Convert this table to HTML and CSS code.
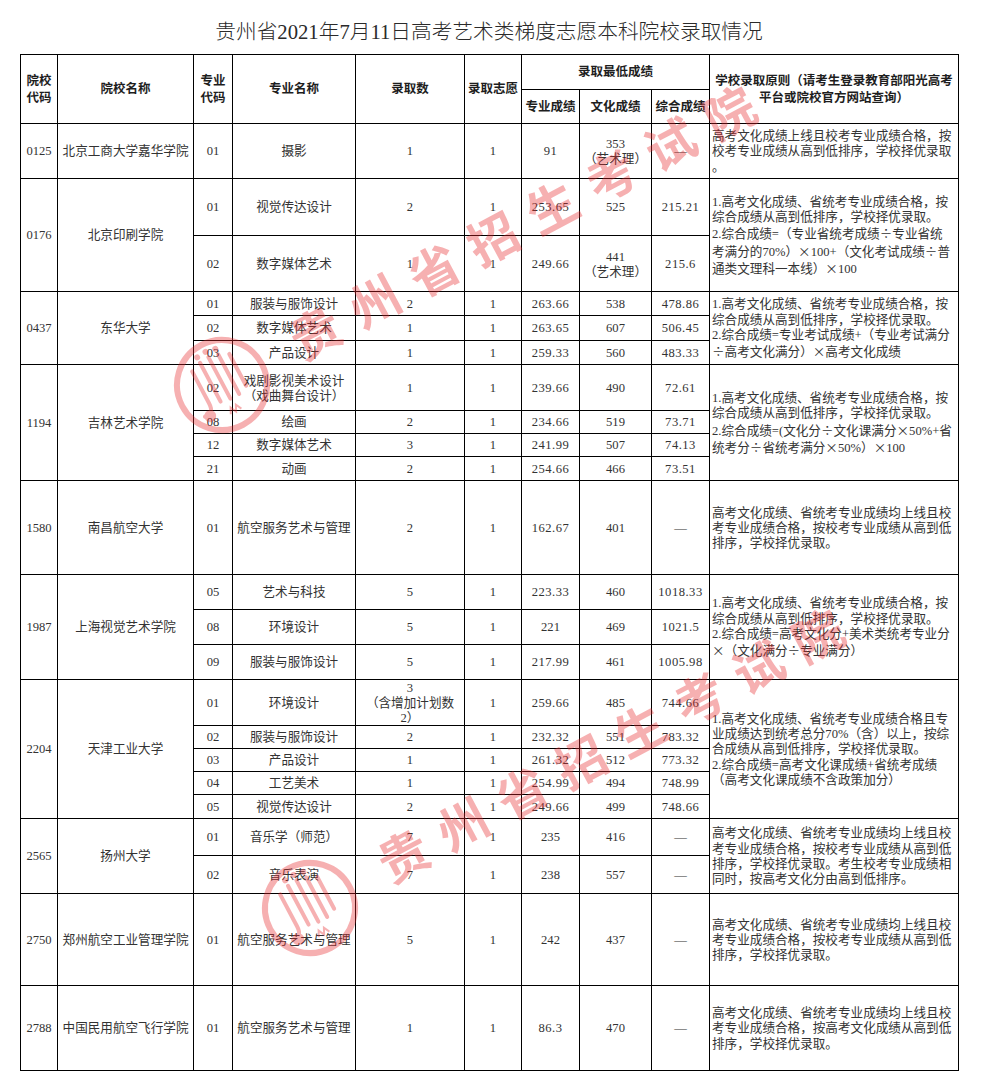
FILE: index.html
```html
<!DOCTYPE html>
<html lang="zh-CN">
<head>
<meta charset="utf-8">
<title>贵州省2021年7月11日高考艺术类梯度志愿本科院校录取情况</title>
<link rel="stylesheet" href="styles.css">
</head>
<body>
<main class="page">
  <h1 class="title">贵州省2021年7月11日高考艺术类梯度志愿本科院校录取情况</h1>
  <table class="grid">
    <colgroup>
      <col class="c1"><col class="c2"><col class="c3"><col class="c4"><col class="c5">
      <col class="c6"><col class="c7"><col class="c8"><col class="c9"><col class="c10">
    </colgroup>
    <thead>
      <tr class="h35">
        <th rowspan="2">院校<br>代码</th>
        <th rowspan="2">院校名称</th>
        <th rowspan="2">专业<br>代码</th>
        <th rowspan="2">专业名称</th>
        <th rowspan="2">录取数</th>
        <th rowspan="2">录取志愿</th>
        <th colspan="3">录取最低成绩</th>
        <th rowspan="2">学校录取原则（请考生登录教育部阳光高考<br>平台或院校官方网站查询）</th>
      </tr>
      <tr class="h34">
        <th>专业成绩</th><th>文化成绩</th><th>综合成绩</th>
      </tr>
    </thead>
    <tbody>
      <tr class="h55">
        <td>0125</td><td>北京工商大学嘉华学院</td><td>01</td><td>摄影</td><td>1</td><td>1</td>
        <td class="num">91</td><td class="ml">353<br>（艺术理）</td><td>—</td>
        <td class="rule">高考文化成绩上线且校考专业成绩合格，按<br>校考专业成绩从高到低排序，学校择优录取<br>。</td>
      </tr>

      <tr class="h57">
        <td rowspan="2">0176</td><td rowspan="2">北京印刷学院</td><td>01</td><td>视觉传达设计</td><td>2</td><td>1</td>
        <td class="num">253.65</td><td>525</td><td class="num">215.21</td>
        <td rowspan="2" class="rule">1.高考文化成绩、省统考专业成绩合格，按<br>综合成绩从高到低排序，学校择优录取。<br>2.综合成绩=（专业省统考成绩<span class="fw">÷</span>专业省统<br>考满分的70%）<span class="fw">×</span>100+（文化考试成绩<span class="fw">÷</span>普<br>通类文理科一本线）<span class="fw">×</span>100</td>
      </tr>
      <tr class="h56">
        <td>02</td><td>数字媒体艺术</td><td>1</td><td>1</td>
        <td class="num">249.66</td><td class="ml">441<br>（艺术理）</td><td class="num">215.6</td>
      </tr>

      <tr class="h24">
        <td rowspan="3">0437</td><td rowspan="3">东华大学</td><td>01</td><td>服装与服饰设计</td><td>2</td><td>1</td>
        <td class="num">263.66</td><td>538</td><td class="num">478.86</td>
        <td rowspan="3" class="rule">1.高考文化成绩、省统考专业成绩合格，按<br>综合成绩从高到低排序，学校择优录取。<br>2.综合成绩=专业考试成绩+（专业考试满分<br><span class="fw">÷</span>高考文化满分）<span class="fw">×</span>高考文化成绩</td>
      </tr>
      <tr class="h25">
        <td>02</td><td>数字媒体艺术</td><td>1</td><td>1</td><td class="num">263.65</td><td>607</td><td class="num">506.45</td>
      </tr>
      <tr class="h24">
        <td>03</td><td>产品设计</td><td>1</td><td>1</td><td class="num">259.33</td><td>560</td><td class="num">483.33</td>
      </tr>

      <tr class="h46">
        <td rowspan="4">1194</td><td rowspan="4">吉林艺术学院</td><td>02</td><td class="ml">戏剧影视美术设计<br>（戏曲舞台设计）</td><td>1</td><td>1</td>
        <td class="num">239.66</td><td>490</td><td class="num">72.61</td>
        <td rowspan="4" class="rule">1.高考文化成绩、省统考专业成绩合格，按<br>综合成绩从高到低排序，学校择优录取。<br>2.综合成绩=(文化分<span class="fw">÷</span>文化课满分<span class="fw">×</span>50%+省<br>统考分<span class="fw">÷</span>省统考满分<span class="fw">×</span>50%）<span class="fw">×</span>100</td>
      </tr>
      <tr class="h23">
        <td>08</td><td>绘画</td><td>2</td><td>1</td><td class="num">234.66</td><td>519</td><td class="num">73.71</td>
      </tr>
      <tr class="h23">
        <td>12</td><td>数字媒体艺术</td><td>3</td><td>1</td><td class="num">241.99</td><td>507</td><td class="num">74.13</td>
      </tr>
      <tr class="h24">
        <td>21</td><td>动画</td><td>2</td><td>1</td><td class="num">254.66</td><td>466</td><td class="num">73.51</td>
      </tr>

      <tr class="h94">
        <td>1580</td><td>南昌航空大学</td><td>01</td><td>航空服务艺术与管理</td><td>2</td><td>1</td>
        <td class="num">162.67</td><td>401</td><td>—</td>
        <td class="rule">高考文化成绩、省统考专业成绩均上线且校<br>考专业成绩合格，按校考专业成绩从高到低<br>排序，学校择优录取。</td>
      </tr>

      <tr class="h35">
        <td rowspan="3">1987</td><td rowspan="3">上海视觉艺术学院</td><td>05</td><td>艺术与科技</td><td>5</td><td>1</td>
        <td class="num">223.33</td><td>460</td><td class="num">1018.33</td>
        <td rowspan="3" class="rule">1.高考文化成绩、省统考专业成绩合格，按<br>综合成绩从高到低排序，学校择优录取。<br>2.综合成绩=高考文化分+美术类统考专业分<br><span class="fw">×</span>（文化满分<span class="fw">÷</span>专业满分）</td>
      </tr>
      <tr class="h35">
        <td>08</td><td>环境设计</td><td>5</td><td>1</td><td>221</td><td>469</td><td class="num">1021.5</td>
      </tr>
      <tr class="h35">
        <td>09</td><td>服装与服饰设计</td><td>5</td><td>1</td><td class="num">217.99</td><td>461</td><td class="num">1005.98</td>
      </tr>

      <tr class="h45">
        <td rowspan="5">2204</td><td rowspan="5">天津工业大学</td><td>01</td><td>环境设计</td>
        <td class="plan"><div class="plan-box">3<br>（含增加计划数<br>2）</div></td><td>1</td>
        <td class="num">259.66</td><td>485</td><td class="num">744.66</td>
        <td rowspan="5" class="rule">1.高考文化成绩、省统考专业成绩合格且专<br>业成绩达到统考总分70%（含）以上，按综<br>合成绩从高到低排序，学校择优录取。<br>2.综合成绩=高考文化课成绩+省统考成绩<br>（高考文化课成绩不含政策加分）</td>
      </tr>
      <tr class="h23">
        <td>02</td><td>服装与服饰设计</td><td>2</td><td>1</td><td class="num">232.32</td><td>551</td><td class="num">783.32</td>
      </tr>
      <tr class="h23">
        <td>03</td><td>产品设计</td><td>1</td><td>1</td><td class="num">261.32</td><td>512</td><td class="num">773.32</td>
      </tr>
      <tr class="h23">
        <td>04</td><td>工艺美术</td><td>1</td><td>1</td><td class="num">254.99</td><td>494</td><td class="num">748.99</td>
      </tr>
      <tr class="h24">
        <td>05</td><td>视觉传达设计</td><td>2</td><td>1</td><td class="num">249.66</td><td>499</td><td class="num">748.66</td>
      </tr>

      <tr class="h37">
        <td rowspan="2">2565</td><td rowspan="2">扬州大学</td><td>01</td><td>音乐学（师范）</td><td>7</td><td>1</td>
        <td>235</td><td>416</td><td>—</td>
        <td rowspan="2" class="rule">高考文化成绩、省统考专业成绩均上线且校<br>考专业成绩合格，按校考专业成绩从高到低<br>排序，学校择优录取。考生校考专业成绩相<br>同时，按高考文化分由高到低排序。</td>
      </tr>
      <tr class="h38">
        <td>02</td><td>音乐表演</td><td>7</td><td>1</td><td>238</td><td>557</td><td>—</td>
      </tr>

      <tr class="h92">
        <td>2750</td><td>郑州航空工业管理学院</td><td>01</td><td>航空服务艺术与管理</td><td>5</td><td>1</td>
        <td>242</td><td>437</td><td>—</td>
        <td class="rule">高考文化成绩、省统考专业成绩均上线且校<br>考专业成绩合格，按校考专业成绩从高到低<br>排序，学校择优录取。</td>
      </tr>

      <tr class="h85">
        <td>2788</td><td>中国民用航空飞行学院</td><td>01</td><td>航空服务艺术与管理</td><td>1</td><td>1</td>
        <td class="num">86.3</td><td>470</td><td>—</td>
        <td class="rule">高考文化成绩、省统考专业成绩均上线且校<br>考专业成绩合格，按高考文化成绩从高到低<br>排序，学校择优录取。</td>
      </tr>
    </tbody>
  </table>
</main>

<svg class="watermark" viewBox="0 0 1006 1091" aria-hidden="true">
  <g class="wm" transform="translate(222 385) rotate(-28)">
    <circle class="wm-ring" r="45"/>
    <path class="wm-line" d="M-20 -26 L-20 10 Q-20 22 -30 20"/>
    <path class="wm-line" d="M-9 -30 L-9 14"/>
    <path class="wm-line" d="M1 -31 L1 16"/>
    <path class="wm-line" d="M11 -29 L11 16"/>
    <path class="wm-line" d="M21 -24 L21 12"/>
    <circle class="wm-dot" cx="-25" cy="22" r="6"/>
    <circle class="wm-dot" cx="-9" cy="-36" r="3"/>
    <circle class="wm-dot" cx="1" cy="-37" r="3"/>
    <circle class="wm-dot" cx="11" cy="-35" r="3"/>
    <path class="wm-thin" d="M-6 30 L-3 24 L0 30 L3 24 L6 30"/>
    <text class="wm-text" x="82" y="17">贵州省招生考试院</text>
  </g>
  <g class="wm" transform="translate(310 908) rotate(-28)">
    <circle class="wm-ring" r="45"/>
    <path class="wm-line" d="M-20 -26 L-20 10 Q-20 22 -30 20"/>
    <path class="wm-line" d="M-9 -30 L-9 14"/>
    <path class="wm-line" d="M1 -31 L1 16"/>
    <path class="wm-line" d="M11 -29 L11 16"/>
    <path class="wm-line" d="M21 -24 L21 12"/>
    <circle class="wm-dot" cx="-25" cy="22" r="6"/>
    <circle class="wm-dot" cx="-9" cy="-36" r="3"/>
    <circle class="wm-dot" cx="1" cy="-37" r="3"/>
    <circle class="wm-dot" cx="11" cy="-35" r="3"/>
    <path class="wm-thin" d="M-6 30 L-3 24 L0 30 L3 24 L6 30"/>
    <text class="wm-text" x="82" y="17">贵州省招生考试院</text>
  </g>
</svg>
</body>
</html>
```

FILE: styles.css
```css
html, body {
  margin: 0;
  padding: 0;
  background: #ffffff;
}

body {
  position: relative;
  width: 1006px;
  min-height: 1091px;
  font-family: "Liberation Serif", "Noto Sans CJK SC", serif;
  color: #333333;
}

.page {
  width: 938px;
  margin-left: 20px;
}

.title {
  margin: 0;
  padding: 17px 0 7px;
  height: 30px;
  line-height: 30px;
  font-size: 20.7px;
  font-weight: 300;
  text-align: center;
  color: #2a2a2a;
  white-space: nowrap;
}

.grid {
  width: 938px;
  border-collapse: collapse;
  table-layout: fixed;
}

.c1 { width: 37px; }
.c2 { width: 136px; }
.c3 { width: 39px; }
.c4 { width: 123px; }
.c5 { width: 109px; }
.c6 { width: 57px; }
.c7 { width: 58px; }
.c8 { width: 72px; }
.c9 { width: 58px; }
.c10 { width: 249px; }

.grid th,
.grid td {
  border: 1px solid #000000;
  padding: 0 1px;
  text-align: center;
  vertical-align: middle;
  white-space: nowrap;
  overflow: hidden;
}

.grid th {
  font-family: "Liberation Sans", "Noto Sans CJK SC", sans-serif;
  font-weight: 700;
  font-size: 12.5px;
  line-height: 16.5px;
  color: #1e1e1e;
  padding-top: 1px;
}

.grid td {
  font-size: 12.6px;
  line-height: 15.3px;
  color: #333333;
  padding-top: 2px;
}

.grid td.num {
  letter-spacing: 0.5px;
}

.grid td.ml {
  line-height: 15px;
}

.grid td.rule {
  text-align: left;
  padding-left: 2px;
  line-height: 15.3px;
}

.fw {
  font-family: "Noto Sans CJK SC", sans-serif;
}

.grid td.plan {
  padding: 0;
  vertical-align: top;
}

.plan-box {
  height: 44px;
  padding-top: 1px;
  line-height: 15px;
  overflow: hidden;
}

.h23 { height: 23px; }
.h24 { height: 24px; }
.h25 { height: 25px; }
.h34 { height: 34px; }
.h35 { height: 35px; }
.h37 { height: 37px; }
.h38 { height: 38px; }
.h45 { height: 45px; }
.h46 { height: 46px; }
.h55 { height: 55px; }
.h56 { height: 56px; }
.h57 { height: 57px; }
.h85 { height: 85px; }
.h92 { height: 92px; }
.h94 { height: 94px; }

.watermark {
  position: absolute;
  left: 0;
  top: 0;
  width: 1006px;
  height: 1091px;
  pointer-events: none;
}

.wm {
  opacity: 0.36;
}

.wm-ring {
  fill: none;
  stroke: #e8262a;
  stroke-width: 6;
}

.wm-line {
  fill: none;
  stroke: #e8262a;
  stroke-width: 4;
  stroke-linecap: round;
}

.wm-thin {
  fill: none;
  stroke: #e8262a;
  stroke-width: 2;
}

.wm-dot {
  fill: #e8262a;
}

.wm-text {
  fill: #e8262a;
  font-family: "Noto Sans CJK SC", sans-serif;
  font-weight: 700;
  font-size: 50px;
  letter-spacing: 17px;
}
```
